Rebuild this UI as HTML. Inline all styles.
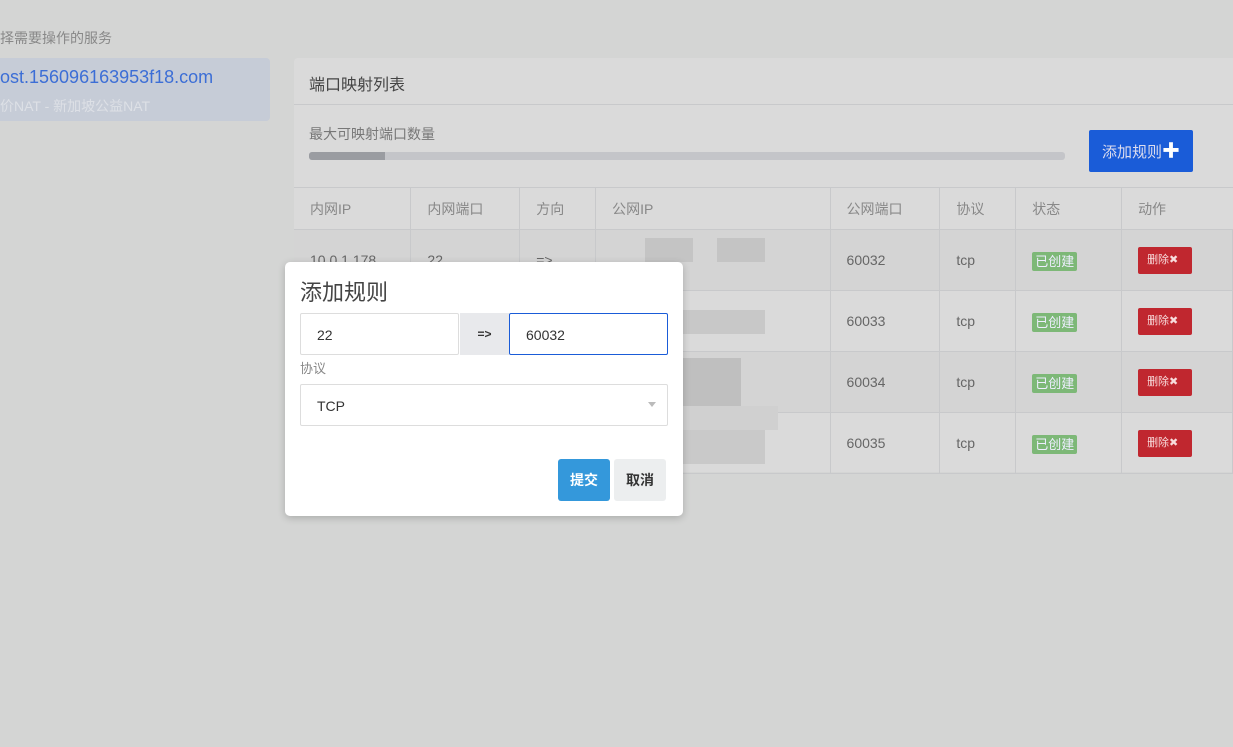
<!DOCTYPE html><html><head><meta charset="utf-8"><style>
*{box-sizing:border-box;margin:0;padding:0}
body{width:1233px;height:747px;background:#d4d5d4;font-family:"Liberation Sans","Noto Sans CJK SC",sans-serif;position:relative;overflow:hidden;color:#555}
.a{position:absolute}
.card{left:294px;top:58px;width:960px;height:414px;background:#dadada;border-radius:4px}
table{position:absolute;left:294px;top:187px;border-collapse:collapse;font-size:14px;color:#666}
td{border:1px solid #c8c9cb;height:61px;padding:0 0 0 16px;border-left:none;box-sizing:border-box}
tr.h td{height:42px;color:#888}
tr.o td{background:#d4d4d4}
.g{background:#7db877;color:#eef;font-size:13px;padding:2px 3px;border-radius:2px}
.r{display:inline-block;background:#c0272f;color:#f8dcdc;font-size:11px;width:54px;height:27px;line-height:27px;padding-left:9px;border-radius:2px}
.blk{position:absolute;background:#c6c6c6}
.modal{left:285px;top:262px;width:398px;height:254px;background:#fff;border-radius:5px;box-shadow:0 2px 8px rgba(0,0,0,.2)}
.inp{position:absolute;border:1px solid #ddd;border-radius:2px;height:42px;font-size:14px;color:#333;padding:13px 16px}
</style></head><body>
<div class="a" style="left:0;top:28px;font-size:14px;color:#888">择需要操作的服务</div>
<div class="a" style="left:-5px;top:58px;width:275px;height:63px;background:#c6ccd7;border-radius:4px"></div>
<div class="a" style="left:0;top:67px;font-size:18px;color:#3c6ed6">ost.156096163953f18.com</div>
<div class="a" style="left:0;top:96px;font-size:14px;color:#dde0e6">价NAT - 新加坡公益NAT</div>
<div class="a card"></div>
<div class="a" style="left:294px;top:104px;width:939px;height:1px;background:#c8c9cb"></div>
<div class="a" style="left:309px;top:71px;font-size:16px;color:#444">端口映射列表</div>
<div class="a" style="left:309px;top:124px;font-size:14px;color:#777">最大可映射端口数量</div>
<div class="a" style="left:309px;top:152px;width:756px;height:8px;background:#c4c5c9;border-radius:3px"></div>
<div class="a" style="left:309px;top:152px;width:76px;height:8px;background:#9a9ca1;border-radius:3px 0 0 3px"></div>
<div class="a" style="left:1089px;top:130px;width:104px;height:42px;background:#1a5cd8;border-radius:2px;color:#dde;font-size:15px;line-height:42px;text-align:center">添加规则<b style="color:#fff;font-size:18px">✚</b></div>
<table>
<tr class="h"><td style="width:117px">内网IP</td><td style="width:109px">内网端口</td><td style="width:76px">方向</td><td style="width:235px">公网IP</td><td style="width:110px">公网端口</td><td style="width:76px">协议</td><td style="width:106px">状态</td><td style="width:111px;border-right:none">动作</td></tr>
<tr class="o"><td>10.0.1.178</td><td>22</td><td>=&gt;</td><td></td><td>60032</td><td>tcp</td><td><span class="g">已创建</span></td><td><span class="r">删除✖</span></td></tr>
<tr><td></td><td></td><td></td><td></td><td>60033</td><td>tcp</td><td><span class="g">已创建</span></td><td><span class="r">删除✖</span></td></tr>
<tr class="o"><td></td><td></td><td></td><td></td><td>60034</td><td>tcp</td><td><span class="g">已创建</span></td><td><span class="r">删除✖</span></td></tr>
<tr><td></td><td></td><td></td><td></td><td>60035</td><td>tcp</td><td><span class="g">已创建</span></td><td><span class="r">删除✖</span></td></tr>
</table>
<div class="blk" style="left:645px;top:238px;width:48px;height:24px;background:#c4c4c4"></div>
<div class="blk" style="left:717px;top:238px;width:48px;height:24px;background:#c4c4c4"></div>
<div class="blk" style="left:683px;top:310px;width:82px;height:24px;background:#c8c8c8"></div>
<div class="blk" style="left:683px;top:358px;width:58px;height:48px;background:#bfbfbf"></div>
<div class="blk" style="left:683px;top:406px;width:95px;height:24px;background:#d0d0d0"></div>
<div class="blk" style="left:683px;top:430px;width:82px;height:34px;background:#c9c9c9"></div>
<div class="a modal">
<div class="a" style="left:15px;top:13px;font-size:22px;color:#444">添加规则</div>
<div class="inp" style="left:15px;top:51px;width:159px">22</div>
<div class="a" style="left:175px;top:51px;width:49px;height:42px;background:#e8e9ec;font-size:12px;font-weight:bold;color:#333;text-align:center;line-height:42px">=&gt;</div>
<div class="inp" style="left:224px;top:51px;width:159px;border-color:#1a5cd8">60032</div>
<div class="a" style="left:15px;top:96px;font-size:13px;color:#888">协议</div>
<div class="inp" style="left:15px;top:122px;width:368px">TCP<span style="position:absolute;right:11px;top:17px;border:4px solid transparent;border-top:5px solid #bbb"></span></div>
<div class="a" style="left:273px;top:197px;width:52px;height:42px;background:#3498db;border-radius:3px;color:#fff;font-weight:bold;font-size:14px;text-align:center;line-height:42px">提交</div>
<div class="a" style="left:329px;top:197px;width:52px;height:42px;background:#eceeef;border-radius:3px;color:#333;font-weight:bold;font-size:14px;text-align:center;line-height:42px">取消</div>
</div>
</body></html>
